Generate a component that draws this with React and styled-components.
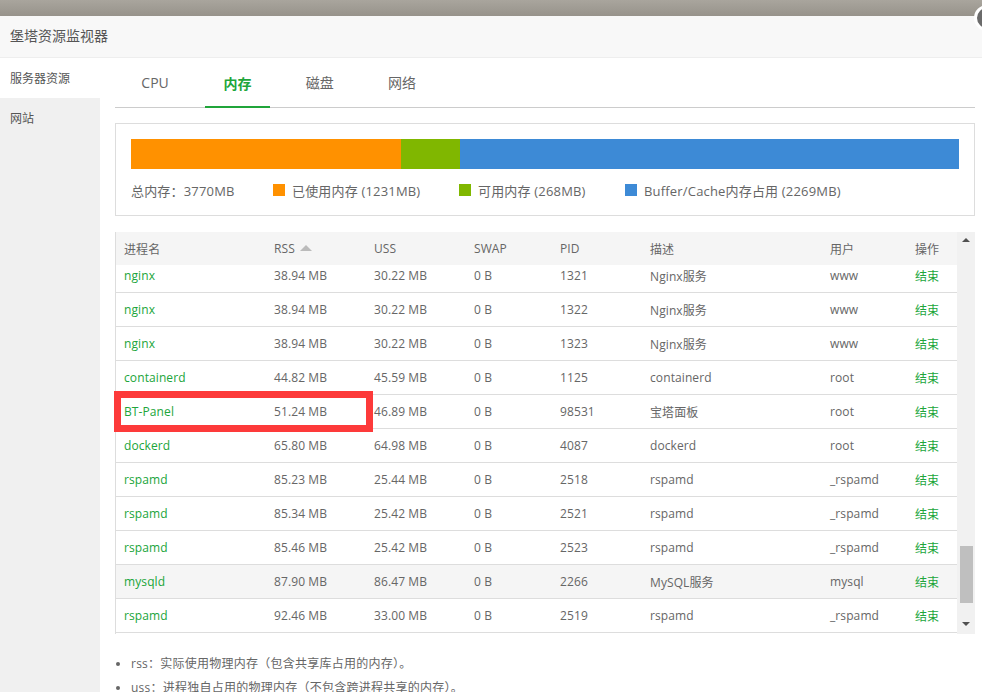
import React from 'react';
import styled, { createGlobalStyle } from 'styled-components';

const Global = createGlobalStyle`
  html, body { margin: 0; padding: 0; height: 692px; overflow: hidden; background: #fff; }
  body { font-family: "Open Sans", "Noto Sans CJK SC", sans-serif; color: #666; font-size: 12px; }
`;
const Page = styled.div`width: 982px; height: 692px; position: relative; overflow: hidden; display: flex; flex-direction: column;`;
const Backdrop = styled.div`height: 16px; flex: none; background: linear-gradient(#a9a59d, #97938b);`;
const Close = styled.div`
  position: absolute; left: 974px; top: 5px; width: 26px; height: 26px; border-radius: 50%;
  background: #6b6b6b; border: 3px solid #fff; box-sizing: border-box;
`;
const Header = styled.div`
  height: 41px; flex: none; background: #f8f8f8; border-bottom: 1px solid #eee;
  padding-left: 10px; color: #555; line-height: 39px; font-size: 14px;
`;
const Body = styled.div`flex: 1; display: flex; min-height: 0;`;
const Side = styled.div`width: 100px; flex: none; background: #f0f0f0;`;
const SideItem = styled.div`
  height: 40px; line-height: 42px; padding-left: 10px; font-size: 12px; color: #555;
  background: ${p => (p.$active ? '#fff' : 'transparent')};
`;
const Main = styled.div`flex: 1; padding: 0 7px 0 15px; min-width: 0;`;
const Tabs = styled.div`display: flex; height: 49px; border-bottom: 1px solid #ccc; box-sizing: content-box;`;
const Tab = styled.div`
  width: 65px; margin-right: 17.3px; height: 49px; box-sizing: border-box; text-align: center; line-height: 50px; font-size: 14px;
  color: ${p => (p.$active ? '#20a53a' : '#666')};
  font-weight: ${p => (p.$active ? 700 : 400)};
  border-bottom: ${p => (p.$active ? '2px solid #20a53a' : 'none')};
  position: relative; top: ${p => (p.$active ? '1px' : 0)};
  &:first-child { margin-left: 7.6px; }
`;
const Panel = styled.div`
  margin-top: 15px; height: 93px; box-sizing: border-box; border: 1px solid #ddd; padding: 15px 15px 0;
`;
const Bar = styled.div`display: flex; height: 30px;`;
const Seg = styled.div`height: 100%; background: ${p => p.$c};`;
const Legend = styled.div`display: flex; align-items: center; margin-top: 11px; height: 20px; font-size: 13px; color: #666; letter-spacing: 0.18px;`;
const Total = styled.span`width: 142px; flex: none;`;
const LegendItem = styled.span`display: flex; align-items: center; width: ${p => p.$w}px; flex: none; white-space: nowrap;`;
const Swatch = styled.i`width: 12px; height: 12px; margin-right: 7px; background: ${p => p.$c}; flex: none;`;
const TableWrap = styled.div`
  margin-top: 16px; height: 402px; position: relative; display: flex; border-left: 1px solid #ddd; overflow: visible;
`;
const TableCol = styled.div`flex: 1; display: flex; flex-direction: column; min-width: 0; position: relative; letter-spacing: 0.1px;`;
const HeadRow = styled.div`
  display: grid; grid-template-columns: 150px 100px 100px 86px 90px 180px 85px 1fr;
  height: 33px; align-items: center; background: #f5f5f5; flex: none; color: #666;
  padding-left: 8px;
`;
const Rows = styled.div`flex: 1; overflow: hidden; min-height: 0;`;
const RowsInner = styled.div`margin-top: -6px;`;
const Row = styled.div`
  display: grid; grid-template-columns: 150px 100px 100px 86px 90px 180px 85px 1fr;
  height: 34px; box-sizing: border-box; align-items: center; padding-left: 8px;
  border-bottom: 1px solid #ddd; color: #666;
  background: ${p => (p.$hover ? '#f5f5f5' : '#fff')};
`;
const Cell = styled.span`white-space: nowrap;`;
const GreenCell = styled(Cell)`color: #20a53a;`;
const SortUp = styled.i`
  display: inline-block; margin-left: 5px; vertical-align: 2px; width: 0; height: 0;
  border-left: 6px solid transparent; border-right: 6px solid transparent; border-bottom: 6px solid #bbb;
`;
const Highlight = styled.div`
  position: absolute; left: -2px; top: 159px; width: 259px; height: 41px; box-sizing: border-box;
  border: 7px solid #fd3a3a; pointer-events: none;
`;
const Scroll = styled.div`width: 18px; flex: none; background: #f1f1f1; position: relative;`;
const Thumb = styled.div`position: absolute; left: 3px; top: 314px; width: 13px; height: 57px; background: #bfbfbf;`;
const ArrowUp = styled.i`
  position: absolute; left: 5px; top: 6px; width: 0; height: 0;
  border-left: 4px solid transparent; border-right: 4px solid transparent; border-bottom: 4px solid #505050;
`;
const ArrowDown = styled.i`
  position: absolute; left: 5px; top: 390px; width: 0; height: 0;
  border-left: 4px solid transparent; border-right: 4px solid transparent; border-top: 4px solid #505050;
`;
const Notes = styled.ul`margin: 17px 0 0; padding: 0 0 0 16px; list-style: disc; color: #666; font-size: 12px; letter-spacing: 0.25px;`;
const Note = styled.li`height: 24px; line-height: 25px; padding-left: 0; white-space: nowrap; &::marker { font-size: 11px; }`;

const rows = [
  ['nginx', '38.94 MB', '30.22 MB', '1321', 'Nginx服务', 'www'],
  ['nginx', '38.94 MB', '30.22 MB', '1322', 'Nginx服务', 'www'],
  ['nginx', '38.94 MB', '30.22 MB', '1323', 'Nginx服务', 'www'],
  ['containerd', '44.82 MB', '45.59 MB', '1125', 'containerd', 'root'],
  ['BT-Panel', '51.24 MB', '46.89 MB', '98531', '宝塔面板', 'root'],
  ['dockerd', '65.80 MB', '64.98 MB', '4087', 'dockerd', 'root'],
  ['rspamd', '85.23 MB', '25.44 MB', '2518', 'rspamd', '_rspamd'],
  ['rspamd', '85.34 MB', '25.42 MB', '2521', 'rspamd', '_rspamd'],
  ['rspamd', '85.46 MB', '25.42 MB', '2523', 'rspamd', '_rspamd'],
  ['mysqld', '87.90 MB', '86.47 MB', '2266', 'MySQL服务', 'mysql', true],
  ['rspamd', '92.46 MB', '33.00 MB', '2519', 'rspamd', '_rspamd'],
];

export default function App() {
  return (
    <Page>
      <Global />
      <Backdrop />
      <Close />
      <Header>堡塔资源监视器</Header>
      <Body>
        <Side>
          <SideItem $active>服务器资源</SideItem>
          <SideItem>网站</SideItem>
        </Side>
        <Main>
          <Tabs>
            <Tab>CPU</Tab>
            <Tab $active>内存</Tab>
            <Tab>磁盘</Tab>
            <Tab>网络</Tab>
          </Tabs>
          <Panel>
            <Bar>
              <Seg $c="#ff9100" style={{ width: 270 }} />
              <Seg $c="#80b700" style={{ width: 58.5 }} />
              <Seg $c="#3d8ad6" style={{ flex: 1 }} />
            </Bar>
            <Legend>
              <Total>总内存：3770MB</Total>
              <LegendItem $w={186}><Swatch $c="#ff9100" />已使用内存 (1231MB)</LegendItem>
              <LegendItem $w={166}><Swatch $c="#80b700" />可用内存 (268MB)</LegendItem>
              <LegendItem $w={300}><Swatch $c="#3d8ad6" />Buffer/Cache内存占用 (2269MB)</LegendItem>
            </Legend>
          </Panel>
          <TableWrap>
            <TableCol>
              <HeadRow>
                <Cell>进程名</Cell>
                <Cell>RSS<SortUp /></Cell>
                <Cell>USS</Cell>
                <Cell>SWAP</Cell>
                <Cell>PID</Cell>
                <Cell>描述</Cell>
                <Cell>用户</Cell>
                <Cell>操作</Cell>
              </HeadRow>
              <Rows>
                <RowsInner>
                  {rows.map((r, i) => (
                    <Row key={i} $hover={r[6]}>
                      <GreenCell>{r[0]}</GreenCell>
                      <Cell>{r[1]}</Cell>
                      <Cell>{r[2]}</Cell>
                      <Cell>0 B</Cell>
                      <Cell>{r[3]}</Cell>
                      <Cell>{r[4]}</Cell>
                      <Cell>{r[5]}</Cell>
                      <GreenCell>结束</GreenCell>
                    </Row>
                  ))}
                </RowsInner>
              </Rows>
              <Highlight />
            </TableCol>
            <Scroll>
              <ArrowUp />
              <Thumb />
              <ArrowDown />
            </Scroll>
          </TableWrap>
          <Notes>
            <Note>rss：实际使用物理内存（包含共享库占用的内存）。</Note>
            <Note>uss：进程独自占用的物理内存（不包含跨进程共享的内存）。</Note>
          </Notes>
        </Main>
      </Body>
    </Page>
  );
}
